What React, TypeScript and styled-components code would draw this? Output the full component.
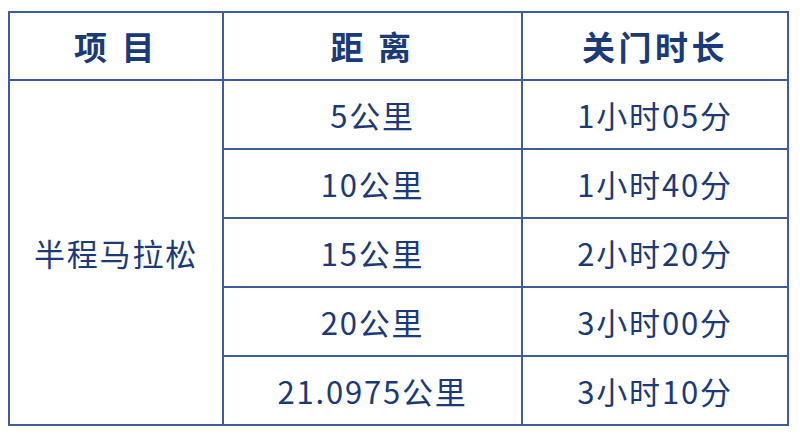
import { Fragment } from "react";
import styled, { createGlobalStyle } from "styled-components";

const Global = createGlobalStyle`
  html, body {
    margin: 0;
    padding: 0;
    background: #ffffff;
  }
  body {
    font-family: "Noto Sans CJK SC", "Noto Sans", sans-serif;
  }
`;

const Page = styled.div`
  padding: 11px 11px 0 8px;
`;

const Table = styled.div`
  display: grid;
  grid-template-columns: 212px 297px 264px;
  grid-template-rows: 66px repeat(5, 67px);
  gap: 2px;
  padding: 2px;
  width: max-content;
  background: #3d5c9c;
`;

const Cell = styled.div<{ $head?: boolean; $rows?: number }>`
  display: flex;
  align-items: center;
  justify-content: center;
  background: #ffffff;
  color: #1b3a78;
  font-size: ${(p) => (p.$head ? "33px" : "31px")};
  font-weight: ${(p) => (p.$head ? 700 : 400)};
  letter-spacing: ${(p) => (p.$head ? "3.5px" : "1.8px")};
  white-space: pre;
  ${(p) => (p.$rows ? `grid-row: 2 / span ${p.$rows};` : "")}
`;

const rows = [
  ["5公里", "1小时05分"],
  ["10公里", "1小时40分"],
  ["15公里", "2小时20分"],
  ["20公里", "3小时00分"],
  ["21.0975公里", "3小时10分"],
];

export default function App() {
  return (
    <Page>
      <Global />
      <Table>
        <Cell $head>项 目</Cell>
        <Cell $head>距 离</Cell>
        <Cell $head>关门时长</Cell>
        <Cell $rows={rows.length}>半程马拉松</Cell>
        {rows.map(([d, t]) => (
          <Fragment key={d}>
            <Cell>{d}</Cell>
            <Cell>{t}</Cell>
          </Fragment>
        ))}
      </Table>
    </Page>
  );
}
